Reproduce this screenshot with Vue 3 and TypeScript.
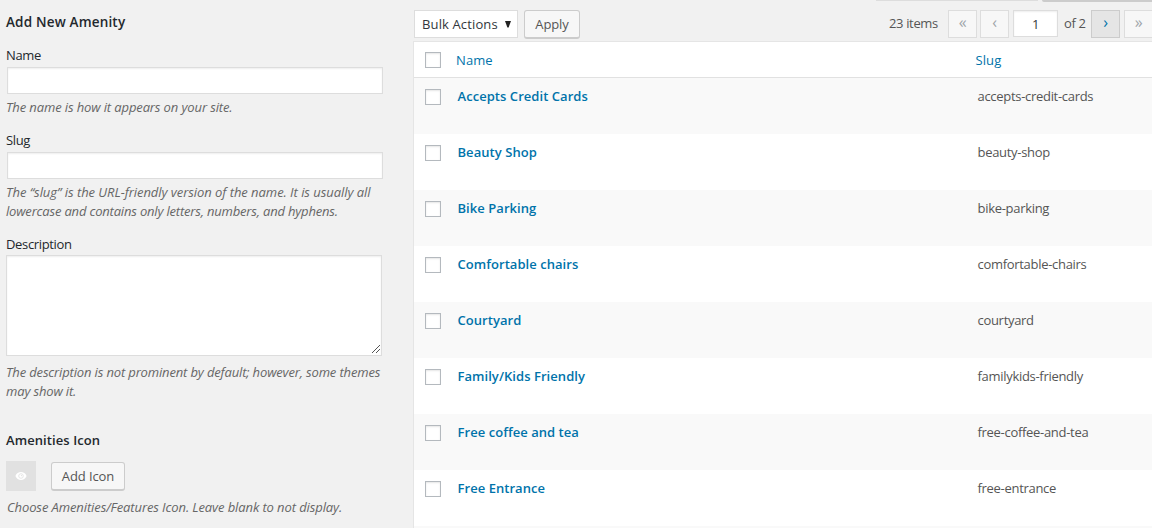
<script setup lang="ts">
interface Amenity {
  name: string
  slug: string
}

const amenities: Amenity[] = [
  { name: 'Accepts Credit Cards', slug: 'accepts-credit-cards' },
  { name: 'Beauty Shop', slug: 'beauty-shop' },
  { name: 'Bike Parking', slug: 'bike-parking' },
  { name: 'Comfortable chairs', slug: 'comfortable-chairs' },
  { name: 'Courtyard', slug: 'courtyard' },
  { name: 'Family/Kids Friendly', slug: 'familykids-friendly' },
  { name: 'Free coffee and tea', slug: 'free-coffee-and-tea' },
  { name: 'Free Entrance', slug: 'free-entrance' },
]
</script>

<template>
  <div class="page">
    <form class="form" @submit.prevent>
      <h2 class="title form-title">Add New Amenity</h2>

      <div class="field">
        <label for="name">Name</label>
        <input id="name" class="text" type="text" />
        <p class="hint name-hint">The name is how it appears on your site.</p>
      </div>

      <div class="field">
        <label for="slug">Slug</label>
        <input id="slug" class="text" type="text" />
        <p class="hint slug-hint">
          The “slug” is the URL-friendly version of the name. It is usually all<br /><span class="second">lowercase and contains only letters, numbers, and hyphens.</span>
        </p>
      </div>

      <div class="field">
        <label for="desc">Description</label>
        <div class="area">
          <textarea id="desc"></textarea>
          <svg class="grip" width="9" height="9" viewBox="0 0 9 9" shape-rendering="crispEdges">
            <path d="M0.5 8.5L8.5 .5M4.5 8.5L8.5 4.5" stroke="#555" fill="none" />
          </svg>
        </div>
        <p class="hint desc-hint">
          The description is not prominent by default; however, some themes<br />may show it.
        </p>
      </div>

      <h2 class="title icon-title">Amenities Icon</h2>
      <div class="icon-row">
        <span class="preview">
          <svg width="12" height="8" viewBox="0 0 12 8">
            <path d="M.4 4C1.6 1.200 3.500.1 6 .1S10.400 1.200 11.600 4C10.400 6.800 8.500 7.900 6 7.900S1.600 6.800.4 4Z" fill="#fff" />
            <circle cx="6" cy="4" r="2.300" fill="none" stroke="#e1e1e1" stroke-width=".8" />
            <circle cx="6.500" cy="3.600" r=".6" fill="#e1e1e1" />
          </svg>
        </span>
        <button class="button add" type="button">Add Icon</button>
      </div>
      <p class="hint icon-hint">Choose Amenities/Features Icon. Leave blank to not display.</p>
    </form>

    <main class="list">
      <div class="tabs"><span class="tab"></span><span class="tab dark"></span></div>
      <div class="nav">
        <div class="select">
          <span class="bulk">Bulk Actions</span>
          <svg width="6" height="7" viewBox="0 0 6 7"><path d="M0 0H6L3.600 6.500H2.400Z" fill="#222" /></svg>
        </div>
        <button class="button apply" type="button">Apply</button>
        <div class="pager">
          <span class="count">23 items</span>
          <span class="page-btn first">«</span>
          <span class="page-btn prev">‹</span>
          <span class="current">1</span>
          <span class="total">of 2</span>
          <span class="page-btn next">›</span>
          <span class="page-btn last">»</span>
        </div>
      </div>

      <div class="table">
        <div class="row head">
          <span class="check"></span>
          <a class="name">Name</a>
          <a class="slug">Slug</a>
        </div>
        <div v-for="item in amenities" :key="item.slug" class="row item">
          <span class="check"></span>
          <a class="name">{{ item.name }}</a>
          <span class="slug">{{ item.slug }}</span>
        </div>
        <div class="row item"></div>
      </div>
    </main>
  </div>
</template>

<style>
body {
  margin: 0;
  overflow: hidden;
  background: #f1f1f1;
}
</style>

<style scoped>
.page {
  display: flex;
  width: 1152px;
  height: 528px;
  overflow: hidden;
  background: #f1f1f1;
  color: #23282d;
  font: 13px/19px 'Open Sans', 'Noto Sans', sans-serif;
  letter-spacing: -0.35px;
  white-space: nowrap;
}
* {
  box-sizing: border-box;
}
.form {
  flex: 0 0 413px;
  padding: 12px 0 0 6px;
}
.title {
  margin: 0;
  font-size: 13px;
  line-height: 20px;
  font-weight: 600;
  letter-spacing: 0.08px;
}
.form-title {
  height: 20px;
  font-size: 13.5px;
  line-height: 21px;
  letter-spacing: 0.18px;
}
.field {
  padding-top: 14px;
}
label {
  display: block;
  height: 21px;
  line-height: 19px;
}
.text {
  display: block;
  width: 376px;
  height: 27px;
  margin: 0 0 0 1px;
  padding: 3px 5px;
  border: 1px solid #ddd;
  background: #fff;
  box-shadow: inset 0 1px 2px rgba(0, 0, 0, 0.07);
}
.hint {
  margin: 4px 0 0;
  color: #666;
  font-style: italic;
  letter-spacing: -0.12px;
}
.slug-hint {
  letter-spacing: -0.05px;
}
.second {
  letter-spacing: -0.18px;
}
.area {
  position: relative;
  width: 376px;
  height: 101px;
  margin-top: -1px;
}
textarea {
  display: block;
  width: 100%;
  height: 100%;
  resize: none;
  border: 1px solid #ddd;
  background: #fff;
  box-shadow: inset 0 1px 2px rgba(0, 0, 0, 0.07);
}
.grip {
  position: absolute;
  right: 2px;
  bottom: 2px;
}
.desc-hint {
  margin-top: 7px;
  letter-spacing: -0.15px;
}
.icon-title {
  margin-top: 29px;
}
.icon-row {
  display: flex;
  gap: 15px;
  height: 30px;
  margin-top: 11px;
}
.preview {
  display: flex;
  width: 30px;
  height: 30px;
  align-items: center;
  justify-content: center;
  background: #e1e1e1;
}
.button {
  height: 29px;
  padding: 0;
  border: 1px solid #ccc;
  border-bottom-width: 2px;
  border-radius: 3px;
  background: #f7f7f7;
  color: #555;
  font: inherit;
  letter-spacing: -0.1px;
}
.add {
  width: 74px;
  margin-top: 1px;
}
.icon-hint {
  margin: 7px 0 0 1px;
  letter-spacing: -0.1px;
}
.list {
  display: flex;
  flex: 0 0 739px;
  flex-direction: column;
}
.tabs {
  display: flex;
  gap: 4px;
  height: 10px;
  padding-left: 463px;
}
.tab {
  width: 162px;
  height: 1px;
  background: #ddd;
}
.tab.dark {
  width: 110px;
  height: 2px;
  border-radius: 0 0 0 3px;
  background: #ccc;
}
.nav {
  display: flex;
  height: 31px;
  padding-left: 1px;
}
.select {
  display: flex;
  width: 104px;
  height: 28px;
  align-items: center;
  justify-content: space-between;
  padding: 0 6px 0 7px;
  border: 1px solid #ddd;
  background: #fff;
  color: #32373c;
  letter-spacing: 0.13px;
}
.apply {
  width: 56px;
  margin-left: 6px;
}
.pager {
  display: flex;
  margin-left: 309px;
  color: #555;
  line-height: 27px;
}
.count {
  width: 59px;
}
.page-btn {
  display: block;
  width: 29px;
  height: 28px;
  border: 1px solid #ddd;
  background: #f7f7f7;
  color: #a0a5aa;
  font-size: 16px;
  line-height: 22px;
  text-align: center;
}
.prev {
  margin-left: 3px;
}
.current {
  width: 45px;
  height: 27px;
  margin-left: 4px;
  border: 1px solid #ddd;
  background: #fff;
  box-shadow: inset 0 1px 2px rgba(0, 0, 0, 0.07);
  color: #32373c;
  line-height: 26px;
  text-align: center;
}
.total {
  width: 33px;
  padding-left: 6px;
}
.next {
  border-color: #ccc;
  background: #e5e5e5;
  color: #0073aa;
}
.last {
  margin-left: 4px;
}
.table {
  height: 487px;
  overflow: hidden;
  border: 1px solid #e5e5e5;
  border-bottom: 0;
}
.row {
  display: grid;
  grid-template-columns: 43.500px 520px 1fr;
  height: 56px;
  padding-top: 9px;
  background: #fff;
}
.item:nth-child(even) {
  background: #f9f9f9;
}
.head {
  grid-template-columns: 42px 519.500px 1fr;
  height: 36px;
  border-bottom: 1px solid #e1e1e1;
  letter-spacing: 0.1px;
}
.check {
  width: 16px;
  height: 16px;
  margin: 2px 0 0 11px;
  border: 1px solid #b4b9be;
  background: #fff;
  box-shadow: inset 0 1px 2px rgba(0, 0, 0, 0.1);
}
.head .check {
  margin-top: 1px;
}
.row a {
  color: #0073aa;
}
.item .name {
  font-weight: 600;
  letter-spacing: 0.05px;
}
.item .slug {
  color: #555;
  letter-spacing: -0.3px;
}
</style>
